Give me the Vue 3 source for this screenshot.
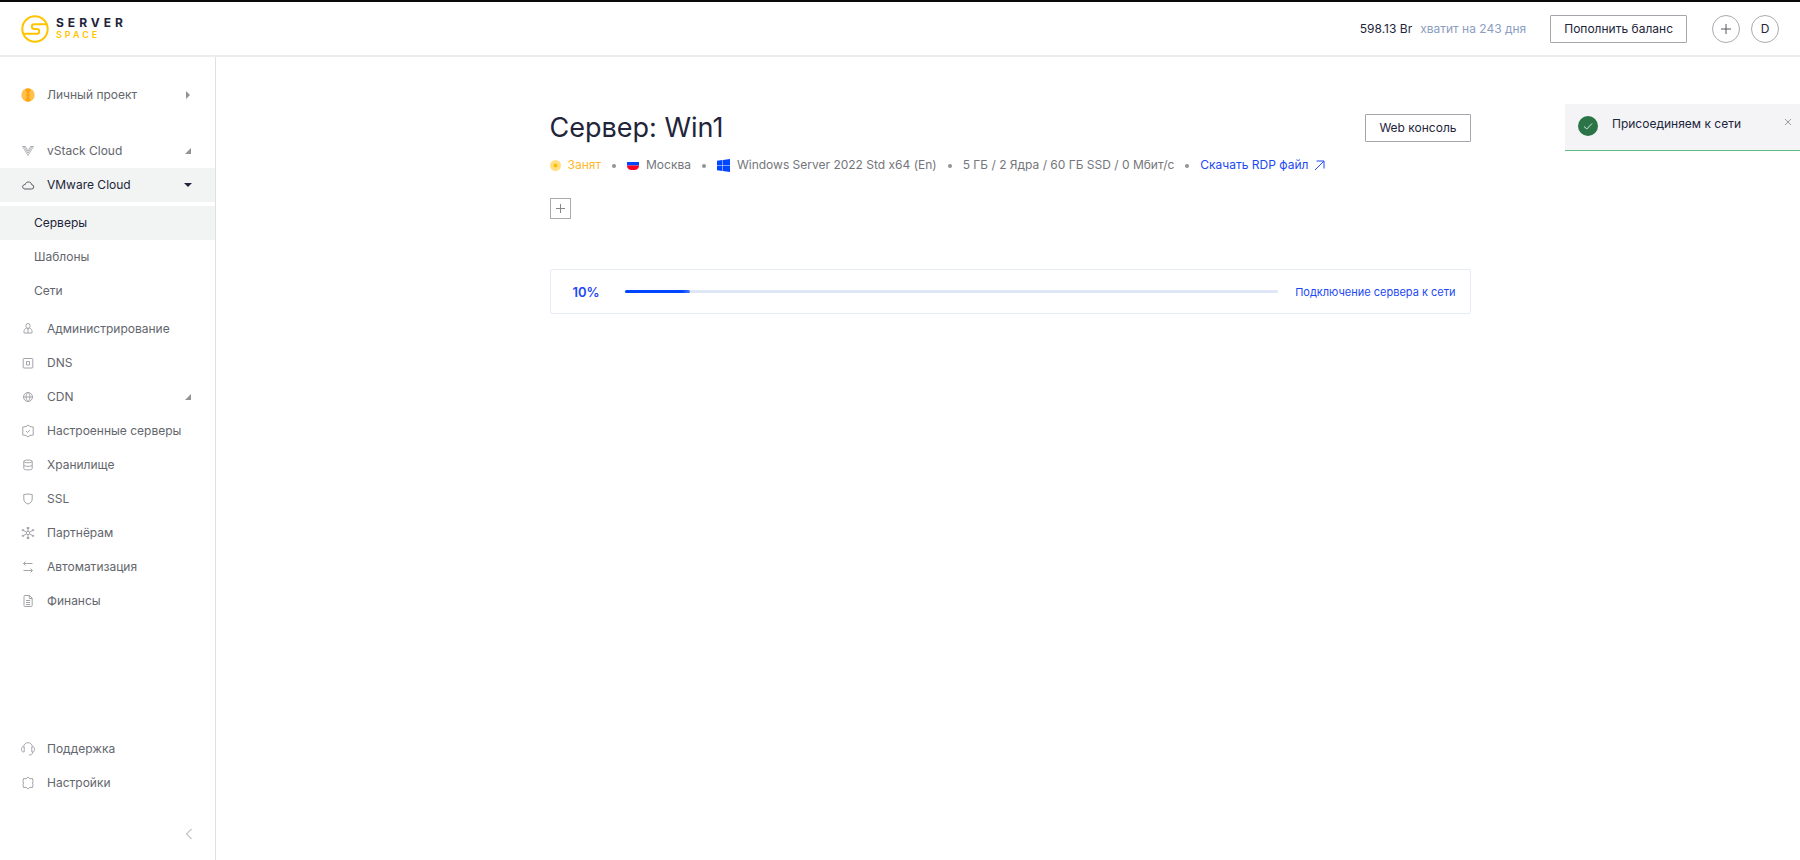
<script setup>
const mainItems = [
  { label: 'Администрирование', icon: 'admin' },
  { label: 'DNS', icon: 'dns' },
  { label: 'CDN', icon: 'cdn', more: true },
  { label: 'Настроенные серверы', icon: 'ready' },
  { label: 'Хранилище', icon: 'storage' },
  { label: 'SSL', icon: 'ssl' },
  { label: 'Партнёрам', icon: 'partner' },
  { label: 'Автоматизация', icon: 'auto' },
  { label: 'Финансы', icon: 'finance' },
]
const footItems = [
  { label: 'Поддержка', icon: 'support' },
  { label: 'Настройки', icon: 'settings' },
]
const subItems = ['Серверы', 'Шаблоны', 'Сети']
const progress = 10

const icons = {
  vstack: 'M1.500 2.500h3L7 7l2.500-4.500h3L7 11.500zM3 2.500L7 9.200l4-6.700',
  cloud: 'M4 11h6.500a2.100 2.100 0 0 0 .3-4.200C10.500 5 9.200 4 7.400 4 5.800 4 4.600 4.900 4.200 6.500 2.600 6.500 1.700 7.500 1.700 8.800 1.700 10.200 2.700 11 4 11z',
  admin: 'M7 1.500a2 2 0 0 1 2 2v.8a2 2 0 0 1-4 0v-.8a2 2 0 0 1 2-2zM5 6.300c-1.200.5-2 1.500-2 3.200v1.500h8V9.500c0-1.700-.8-2.700-2-3.200M5.500 6.700h3M7 7v4',
  dns: 'M3 2.500h8a.8.8 0 0 1 .8.8v7.900a.8.8 0 0 1-.8.8H3a.8.8 0 0 1-.8-.8V3.300a.8.8 0 0 1 .8-.8zM5.500 5.500h3v3.500h-3z',
  cdn: 'M7 2.500a4.500 4.500 0 1 1 0 9 4.500 4.500 0 0 1 0-9zM2.500 7h9M7 2.500c-2.600 2.600-2.600 6.400 0 9M7 2.500c2.600 2.600 2.600 6.400 0 9',
  ready: 'M7 1l1.900 1.500 3.300.5L12.300 6l-.3 1 .3 1-.1 3-3.300.5L7 13l-1.900-1.500-3.300-.5L1.700 8 2 7l-.3-1 .1-3 3.300-.5zM5 7l1.500 1.500L9 6',
  storage: 'M2.800 3.400c0-1.800 8.400-1.800 8.400 0s-8.400 1.800-8.400 0v7.200c0 1.800 8.400 1.800 8.400 0V3.400M2.800 7c0 1.800 8.400 1.800 8.400 0',
  ssl: 'M2.800 2.500c1.500 0 2.800-.5 4.200-.5s2.700.5 4.200.5v4.500c0 2.400-1.600 4.200-4.200 5-2.600-.8-4.200-2.600-4.200-5z',
  partner: 'M7 5.300a1.700 1.700 0 1 1 0 3.400 1.700 1.700 0 0 1 0-3.400zM7 5.300V2M7 8.700V12M5.500 6.200L2.200 4.200M8.500 7.800l3.300 2M8.500 6.200l3.300-2M5.500 7.800l-3.300 2M6 1.500h2v1H6zM6 11.500h2v1H6zM1.200 3.700h1.500v1H1.200zM11.300 3.700h1.500v1h-1.500zM1.200 9.300h1.500v1H1.200zM11.300 9.300h1.500v1h-1.500z',
  auto: 'M4.500 1.500l-2 2 2 2M2.500 3.500H11.500M9.500 8.500l2 2-2 2M11.500 10.500H2.500',
  finance: 'M4 1.500h4.500l2.700 2.700V11.500a1 1 0 0 1-1 1H4a1 1 0 0 1-1-1v-9a1 1 0 0 1 1-1zM8.300 1.500v3h2.900M5 6.500h4.200M5 8.500h4.200M5 10.500h4.200',
  support: 'M2.500 4.500C3.200 2 5 .7 7 .7s3.800 1.300 4.500 3.800M2.200 4.700c-1.200 0-1.700 1-1.700 2.600s.5 2.600 1.700 2.600h1V4.700zM11.800 4.700c1.200 0 1.700 1 1.700 2.600s-.5 2.600-1.700 2.600h-1V4.700zM11.800 10c0 2-1.500 3-3.800 3',
  settings: 'M7 1l1.800 1.700 2.700-.2.500 2.700L11.500 7l.5 1.800-.5 2.700-2.700-.2L7 13l-1.800-1.700-2.700.2L2 8.800 2.500 7 2 5.200l.5-2.700 2.700.2z',
}
</script>

<template>
  <div class="page">
    <header class="header">
      <a class="logo" href="#" aria-label="Serverspace">
        <svg class="logo-mark" viewBox="0 0 28 28" aria-hidden="true">
          <circle cx="14" cy="14" r="12.700" />
          <path d="M26 9.200H13.200a2.400 2.400 0 0 0 0 4.800h2.600a2.400 2.400 0 0 1 0 4.800H2" />
        </svg>
        <span class="logo-text">
          <span class="logo-top">SERVER</span>
          <span class="logo-bottom">SPACE</span>
        </span>
      </a>
      <div class="account">
        <p class="balance"><span class="sum">598.13 Br</span><span class="days">хватит на 243 дня</span></p>
        <button class="btn" type="button">Пополнить баланс</button>
        <div class="rounds">
          <button class="round" type="button" aria-label="Создать">
            <svg width="12" height="12" viewBox="0 0 12 12"><path d="M6 1v10M1 6h10" /></svg>
          </button>
          <button class="round" type="button">D</button>
        </div>
      </div>
    </header>

    <div class="body">
      <nav class="side">
        <a class="item project" href="#">
          <svg class="ico" viewBox="0 0 14 14" aria-hidden="true">
            <circle cx="7" cy="7" r="6.700" fill="#ffc04d" stroke="none" />
            <path d="M7 7L4 1.200a6.700 6.700 0 0 1 6 0zM7 7l3 5.800a6.700 6.700 0 0 1-6 0z" fill="#ffa412" stroke="none" />
            <circle cx="7" cy="7" r="2" fill="#ffa412" stroke="none" />
          </svg>
          <span>Личный проект</span>
          <svg class="arrow" viewBox="0 0 10 10"><path d="M3 1l4 4-4 4z" /></svg>
        </a>
        <a class="item" href="#">
          <svg class="ico thin" viewBox="0 0 14 14"><path :d="icons.vstack" /></svg>
          <span>vStack Cloud</span>
          <svg class="arrow" viewBox="0 0 10 10"><path d="M8 2v6H2z" /></svg>
        </a>
        <a class="item active" href="#">
          <svg class="ico" viewBox="0 0 14 14"><path :d="icons.cloud" /></svg>
          <span>VMware Cloud</span>
          <svg class="arrow" viewBox="0 0 10 10"><path d="M1 3h8L5 7z" /></svg>
        </a>
        <div class="sub">
          <a v-for="(s, i) in subItems" :key="s" class="item child" :class="{ active: i === 0 }" href="#">{{ s }}</a>
        </div>
        <a v-for="m in mainItems" :key="m.label" class="item" href="#">
          <svg class="ico" viewBox="0 0 14 14"><path :d="icons[m.icon]" /></svg>
          <span>{{ m.label }}</span>
          <svg v-if="m.more" class="arrow" viewBox="0 0 10 10"><path d="M8 2v6H2z" /></svg>
        </a>
        <div class="foot">
          <a v-for="m in footItems" :key="m.label" class="item" href="#">
            <svg class="ico" viewBox="0 0 14 14"><path :d="icons[m.icon]" /></svg>
            <span>{{ m.label }}</span>
          </a>
          <button class="collapse" type="button" aria-label="Свернуть меню">
            <svg width="8" height="12" viewBox="0 0 8 12"><path d="M6.500 1L1.500 6l5 5" /></svg>
          </button>
        </div>
      </nav>

      <main class="main">
        <div class="content">
          <div class="title-row">
            <h1>Сервер: Win1</h1>
            <button class="btn" type="button">Web консоль</button>
          </div>
          <ul class="meta">
            <li class="busy">
              <svg width="11" height="11" viewBox="0 0 11 11"><circle cx="5.500" cy="5.500" r="5.500" fill="#ffe084" /><circle cx="5.500" cy="5.500" r="2" fill="#ffbc00" /></svg>
              Занят
            </li>
            <li>
              <svg width="12" height="12" viewBox="0 0 12 12"><path d="M0 3h12v3.500H0z" fill="#0045ff" /><path d="M0 6.500h12A4.500 4.500 0 0 1 8 11H4A4.500 4.500 0 0 1 0 6.500z" fill="#ff0024" /></svg>
              Москва
            </li>
            <li>
              <svg width="13" height="13" viewBox="0 0 13 13" fill="#0045ff"><path d="M0 1.800l5.500-.8v5.200H0zM6 .9L13 0v6.200H6zM0 6.800h5.500V12L0 11.200zM6 6.800h7V13l-7-.9z" /></svg>
              Windows Server 2022 Std x64 (En)
            </li>
            <li>5 ГБ / 2 Ядра / 60 ГБ SSD / 0 Мбит/с</li>
            <li>
              <a class="rdp" href="#">Скачать RDP файл
                <svg width="11" height="11" viewBox="0 0 11 11"><path d="M1 10L10 1M2.500 1H10v7.500" /></svg>
              </a>
            </li>
          </ul>
          <button class="add" type="button" aria-label="Добавить">
            <svg width="11" height="11" viewBox="0 0 11 11"><path d="M5.500 1v9M1 5.500h9" /></svg>
          </button>
          <section class="task">
            <strong>{{ progress }}%</strong>
            <div class="track"><div class="fill" :style="{ width: progress + '%' }"></div></div>
            <span class="task-name">Подключение сервера к сети</span>
          </section>
        </div>
      </main>
    </div>

    <div class="toast" role="status">
      <svg class="ok" width="20" height="20" viewBox="0 0 20 20"><circle cx="10" cy="10" r="10" /><path d="M6 10.500l2.800 2.500L14 7.500" /></svg>
      <span>Присоединяем к сети</span>
      <button class="close" type="button" aria-label="Закрыть">
        <svg width="8" height="8" viewBox="0 0 8 8"><path d="M1 1l6 6M7 1L1 7" /></svg>
      </button>
    </div>
  </div>
</template>

<style>
body {
  background: #fff;
}
</style>

<style scoped>
.page {
  position: relative;
  display: flex;
  flex-direction: column;
  min-height: 100vh;
  box-sizing: border-box;
  border-top: 2px solid #0a0a0a;
  font-family: Inter, "Liberation Sans", sans-serif;
  font-size: 12px;
  line-height: 16px;
  color: #22253a;
}
.page * {
  box-sizing: border-box;
}
a {
  color: inherit;
  text-decoration: none;
}
button {
  font: inherit;
  color: inherit;
  background: none;
  border: 0;
  padding: 0;
  cursor: pointer;
}
svg {
  flex: none;
}
.header {
  display: flex;
  align-items: center;
  justify-content: space-between;
  height: 55px;
  padding: 0 21px;
  border-bottom: 2px solid #ededee;
}
.logo {
  display: flex;
  align-items: center;
  gap: 7px;
}
.logo-mark {
  width: 28px;
  height: 28px;
  fill: none;
  stroke: #ffc400;
  stroke-width: 2;
}
.logo-text {
  display: flex;
  flex-direction: column;
  font-weight: 700;
}
.logo-top {
  font-size: 12px;
  line-height: 12px;
  letter-spacing: 4px;
}
.logo-bottom {
  font-size: 9px;
  line-height: 12px;
  letter-spacing: 3px;
  font-weight: 600;
  color: #ffc400;
}
.account {
  display: flex;
  align-items: center;
}
.balance {
  display: flex;
  gap: 8px;
  margin: 0 24px 0 0;
}
.days {
  color: #8b9dc0;
}
.btn {
  height: 28px;
  padding: 0 13px;
  border: 1px solid #a5a6ac;
  border-radius: 1px;
  background: #fff;
}
.rounds {
  display: flex;
  gap: 11px;
  margin-left: 25px;
}
.round {
  display: flex;
  align-items: center;
  justify-content: center;
  width: 28px;
  height: 28px;
  border: 1px solid #a9aaaf;
  border-radius: 50%;
}
.round svg,
.add svg,
.collapse svg,
.close svg {
  fill: none;
  stroke: #55575f;
}
.body {
  display: flex;
  flex: 1;
}
.side {
  display: flex;
  flex-direction: column;
  flex: none;
  width: 216px;
  padding: 21px 0 10px;
  border-right: 1px solid #dfe0e1;
  color: #63666d;
}
.item {
  display: flex;
  align-items: center;
  height: 34px;
  padding: 0 22px 0 21px;
}
.project {
  margin-bottom: 22px;
}
.item.active {
  color: #22253a;
  background: #f2f4f4;
}
.ico {
  width: 14px;
  height: 14px;
  margin-right: 12px;
  fill: none;
  stroke: #a3a4a8;
}
.ico.thin {
  stroke-width: 0.6px;
  stroke: #84868b;
}
.active .ico {
  stroke: #55575f;
}
.arrow {
  width: 10px;
  height: 10px;
  margin-left: auto;
  fill: #919397;
}
.active .arrow {
  fill: #22253a;
}
.sub {
  padding: 4px 0;
}
.child {
  padding-left: 34px;
}
.foot {
  margin-top: auto;
}
.collapse {
  display: flex;
  align-items: center;
  height: 32px;
  margin: 18px 22px 0 auto;
}
.collapse svg {
  stroke: #9a9b9f;
}
.main {
  flex: 1;
  padding: 54px 0 40px 4px;
}
.content {
  max-width: 921px;
  margin: 0 auto;
}
.title-row {
  display: flex;
  align-items: center;
  justify-content: space-between;
}
h1 {
  margin: 0;
  font-size: 27px;
  line-height: 34px;
  font-weight: 400;
}
.meta {
  display: flex;
  align-items: center;
  margin: 12px 0 0;
  padding: 0;
  list-style: none;
  color: #74767b;
}
.meta li {
  display: flex;
  align-items: center;
  gap: 7px;
}
.meta li + li::before {
  content: "";
  width: 4px;
  height: 4px;
  margin: 2px 4px 0 11px;
  border-radius: 50%;
  background: #919397;
}
.meta .busy {
  color: #ffb82e;
}
.rdp {
  display: flex;
  align-items: center;
  gap: 6px;
  color: #1d49f5;
}
.rdp svg {
  fill: none;
  stroke: #1d49f5;
}
.add {
  display: flex;
  align-items: center;
  justify-content: center;
  width: 21px;
  height: 21px;
  margin-top: 25px;
  border: 1px solid #aaabaf;
}
.add svg {
  stroke: #85878d;
}
.task {
  display: flex;
  align-items: center;
  height: 45px;
  margin-top: 50px;
  padding: 0 14px 0 22px;
  border: 1px solid #e6ecf6;
  border-radius: 2px;
  color: #1d49f5;
  font-size: 11px;
}
.task strong {
  width: 52px;
  font-size: 13px;
  font-weight: 600;
}
.track {
  flex: 1;
  height: 3px;
  margin-right: 17px;
  border-radius: 2px;
  background: #dfe6f5;
}
.fill {
  height: 3px;
  border-radius: 2px;
  background: linear-gradient(90deg, #0045ff 88%, #4d7dff);
}
.toast {
  position: absolute;
  top: 102px;
  right: 0;
  display: flex;
  align-items: flex-start;
  width: 235px;
  height: 47px;
  padding: 12px 8px 0 13px;
  border-bottom: 1px solid #5fbd84;
  background: #f4f4f7;
}
.ok {
  margin-right: 14px;
  fill: #2a7447;
}
.ok path {
  fill: none;
  stroke: #d7e9de;
}
.close {
  display: flex;
  margin: 2px 0 0 auto;
}
.close svg {
  stroke: #9a9b9f;
}
</style>
